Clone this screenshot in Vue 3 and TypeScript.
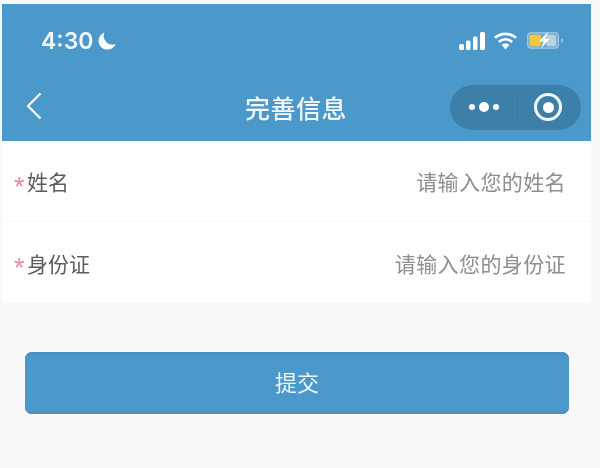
<script setup lang="ts">
const rows = [
  { label: '姓名', hint: '请输入您的姓名' },
  { label: '身份证', hint: '请输入您的身份证' },
]
</script>

<template>
  <div class="page">
    <header class="head">
      <div class="status">
        <div class="clock">
          <span class="time">4:30</span>
          <svg class="moon" width="20" height="20" viewBox="0 0 20 20"><path d="M7.5 1.5A8.6 8.6 0 0 0 18.6 13 A8.8 8.8 0 1 1 7.5 1.5Z" fill="#fff"/></svg>
        </div>
        <div class="sys">
          <svg class="signal" width="26" height="18" viewBox="0 0 26 18"><rect x="0" y="12" width="5" height="6" rx="1.5" fill="#fff"/><rect x="7" y="8.5" width="4.5" height="9.5" rx="1.5" fill="#fff"/><rect x="14" y="4.5" width="4.5" height="13.5" rx="1.5" fill="#fff"/><rect x="21" y="0" width="5" height="18" rx="1.5" fill="#fff"/></svg>
          <svg width="25" height="18" viewBox="0 0 24 18"><path d="M1.5 5.8C7.5 0.6 16.5 0.6 22.5 5.8M5.3 10C9.3 6.6 14.7 6.6 18.7 10" fill="none" stroke="#fff" stroke-width="2.8"/><path d="M8 12.8C10.3 11 13.7 11 16 12.8L12 17.5Z" fill="#fff"/></svg>
          <svg class="batt" width="36" height="17" viewBox="0 0 37 17"><rect x="0.7" y="0.7" width="31.6" height="15.6" rx="3.5" fill="#6fa9d0" stroke="#a5cbe4" stroke-width="1.2"/><rect x="2.5" y="2.5" width="12" height="12" rx="2" fill="#f0c83c"/><rect x="20" y="2.5" width="10" height="12" rx="2" fill="#b5d3e0"/><path d="M20.5 0.5L12.5 9.5H17L14.5 16.5L23.5 6.8H18.8L21.5 0.5Z" fill="#fff"/><rect x="35" y="6.5" width="1.6" height="4" rx="0.8" fill="#a9cde6"/></svg>
        </div>
      </div>
      <div class="nav">
        <svg class="back" width="16" height="28" viewBox="0 0 16 28"><path d="M14.5 1.5L2 14L14.5 26.5" fill="none" stroke="#fff" stroke-width="2.2"/></svg>
        <h1 class="title">完善信息</h1>
        <div class="capsule">
          <div class="dots"><i class="dot"></i><i class="dot big"></i><i class="dot"></i></div>
          <span class="split"></span>
          <div class="target"><i class="core"></i></div>
        </div>
      </div>
    </header>

    <section class="form">
      <div v-for="row in rows" :key="row.label" class="row">
        <div class="label"><span class="star">*</span>{{ row.label }}</div>
        <div class="hint">{{ row.hint }}</div>
      </div>
    </section>

    <div class="actions">
      <button class="submit" type="button">提交</button>
    </div>
  </div>
</template>

<style>
html, body { margin: 0; background: #f8f8f8; }
</style>

<style scoped>
.page {
  box-sizing: border-box;
  width: 600px;
  height: 468px;
  padding: 4px 9px 0 2px;
  background: #f8f8f8;
  font-family: "Liberation Sans", "Noto Sans CJK SC", sans-serif;
  overflow: hidden;
  filter: blur(0.7px);
}
.head {
  height: 137px;
  background: #4b98cb;
  color: #fff;
  display: flex;
  flex-direction: column;
}
.status {
  height: 77px;
  padding: 1px 28px 0 39px;
  display: flex;
  align-items: center;
  justify-content: space-between;
  box-sizing: border-box;
}
.clock { display: flex; align-items: center; gap: 4px; }
.time {
  font-family: Inter, sans-serif;
  font-size: 23px;
  font-weight: 600;
  color: #f0f7fb;
}
.sys { display: flex; align-items: center; gap: 9px; }
.signal { margin-right: -1px; }
.nav {
  height: 60px;
  display: flex;
  align-items: flex-start;
  position: relative;
  padding: 8px 10px 0 24px;
}
.back { margin-top: 7px; }
.title {
  position: absolute;
  left: 243px;
  top: 14px;
  margin: 0;
  font-size: 25px;
  line-height: 36px;
  font-weight: 500;
  letter-spacing: 0.5px;
  color: #f1f7fb;
}
.capsule {
  margin-left: auto;
  width: 131px;
  height: 45px;
  border-radius: 23px;
  background: #3c7fa9;
  display: flex;
  align-items: center;
}
.dots {
  width: 60px;
  padding-left: 4px;
  display: flex;
  align-items: center;
  justify-content: center;
  gap: 3px;
}
.dot { width: 6px; height: 6px; border-radius: 50%; background: #fff; }
.dot.big { width: 10px; height: 10px; margin: 0 1px; }
.split { width: 1px; height: 30px; background: #4686ae; }
.target {
  margin-left: 19px;
  width: 28px;
  height: 28px;
  box-sizing: border-box;
  border: 3px solid #f2f8fb;
  border-radius: 50%;
  display: flex;
  align-items: center;
  justify-content: center;
}
.core { width: 11px; height: 11px; border-radius: 50%; background: #fff; }
.form { background: #fff; }
.row {
  height: 81px;
  box-sizing: border-box;
  padding: 0 25px 0 12px;
  display: flex;
  align-items: center;
  justify-content: space-between;
  border-bottom: 1px solid #f8f8f8;
  font-size: 21px;
}
.row:last-child { border-bottom: 0; }
.label { color: #5c5c5c; display: flex; align-items: center; }
.star {
  color: #e58ea2;
  font-size: 27px;
  font-weight: 400;
  width: 13px;
  line-height: 21px;
  padding-top: 12px;
}
.hint { color: #8e8e8e; letter-spacing: 0.4px; }
.actions { padding: 49px 22px 0 23px; }
.submit {
  display: block;
  width: 544px;
  height: 62px;
  border: 0;
  border-radius: 7px;
  background: #4b98cb;
  box-shadow: inset 0 2px 0 #4a8fbe, inset 0 -2px 0 #4a8fbe;
  color: #eef6fa;
  font: inherit;
  font-size: 22px;
  padding: 0 0 5px;
}
</style>
